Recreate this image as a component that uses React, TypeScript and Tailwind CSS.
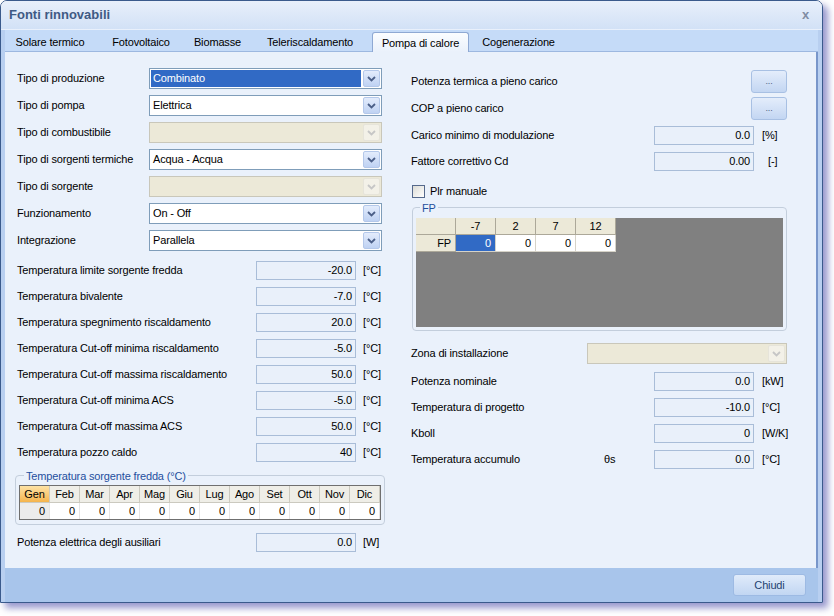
import React from "react";

const months = ["Gen", "Feb", "Mar", "Apr", "Mag", "Giu", "Lug", "Ago", "Set", "Ott", "Nov", "Dic"];

const tabs = [
  { label: "Solare termico", w: "w-[90px]" },
  { label: "Fotovoltaico", w: "w-[92px]" },
  { label: "Biomasse", w: "w-[61px]" },
  { label: "Teleriscaldamento", w: "w-[124px]" },
  { label: "Pompa di calore", w: "w-[97px]", active: true },
  { label: "Cogenerazione", w: "w-[99px]" },
];

function Chevron({ disabled }: { disabled?: boolean }) {
  return (
    <svg width="9" height="6" viewBox="0 0 9 6">
      <path d="M1 1 L4.5 4.5 L8 1" stroke={disabled ? "#c6c6c6" : "#4b5f88"} strokeWidth="1.8" fill="none" />
    </svg>
  );
}

function Combo({ value, selected, disabled, width }: { value?: string; selected?: boolean; disabled?: boolean; width: string }) {
  return (
    <div
      className={`${width} h-[21px] flex items-stretch border p-[1px] ${
        disabled ? "bg-[#ece9d8] border-[#c9c7ba]" : "bg-white border-[#7f9db9]"
      }`}
    >
      <div className={`flex-1 flex items-center px-[2px] ${selected ? "bg-[#316ac5] text-white" : ""}`}>{value}</div>
      <div
        className={`w-[17px] ml-[2px] rounded-[2px] border flex items-center justify-center ${
          disabled ? "border-[#e6e4da] bg-[#f3f1e8]" : "border-[#b4c8ea] bg-linear-to-b from-[#e3ecfc] to-[#bfd2f3]"
        }`}
      >
        <Chevron disabled={disabled} />
      </div>
    </div>
  );
}

function Field({ value }: { value: string }) {
  return (
    <div className="w-[100px] h-[19px] border border-[#a9bdd8] bg-[#e9f0fa] flex items-center justify-end pr-[3px]">
      {value}
    </div>
  );
}

function DotsButton() {
  return (
    <div className="w-[36px] h-[23px] rounded-[3px] border border-[#a8c0e3] bg-linear-to-b from-[#e4edfb] to-[#c3d6f2] flex items-end justify-center pb-[4px] text-[9px] text-[#4d6185]">
      ...
    </div>
  );
}

function SelectRow({ label, ...rest }: { label: string; value?: string; selected?: boolean; disabled?: boolean }) {
  return (
    <div className="flex h-[27px] items-center">
      <span className="w-[132px]">{label}</span>
      <Combo width="w-[233px]" {...rest} />
    </div>
  );
}

function TempRow({ label, value, unit = "[°C]" }: { label: string; value: string; unit?: string }) {
  return (
    <div className="flex h-[26px] items-center">
      <span className="w-[239px]">{label}</span>
      <Field value={value} />
      <span className="ml-[7px]">{unit}</span>
    </div>
  );
}

function RightRow({ label, value, unit, extra }: { label: string; value: string; unit: string; extra?: string }) {
  return (
    <div className="flex h-[26px] items-center">
      {extra ? (
        <>
          <span className="w-[193px]">{label}</span>
          <span className="w-[50px]">{extra}</span>
        </>
      ) : (
        <span className="w-[243px]">{label}</span>
      )}
      <Field value={value} />
      <span className={unit === "[-]" ? "ml-[14px]" : "ml-[8px]"}>{unit}</span>
    </div>
  );
}

export default function App() {
  return (
    <div className="w-[834px] h-[616px] bg-white font-['Liberation_Sans',Arial,sans-serif] text-[11px] tracking-[-0.15px] text-black">
      <div className="w-[823px] h-[603px] border border-[#3a5a8c] rounded-t-[7px] overflow-hidden flex flex-col shadow-[5px_5px_7px_rgba(80,80,170,0.6)]">
        {/* title bar */}
        <div className="h-[29px] flex items-center justify-between pl-[8px] pr-[13px] bg-linear-to-b from-[#e8effb] to-[#d2e1f6] border-b border-[#e9f0fb]">
          <span className="text-[13px] font-bold tracking-normal text-[#3f5a84]">Fonti rinnovabili</span>
          <span className="text-[13px] font-bold text-[#7f8ca3]">x</span>
        </div>

        <div className="flex-1 flex flex-col px-[4px] bg-[#b8cff0]">
          {/* tabs */}
          <div className="h-[22px] flex items-end bg-[#c5dbf8] border-b border-[#9db8e0]">
            {tabs.map((t) =>
              t.active ? (
                <div
                  key={t.label}
                  className={`${t.w} h-[20px] -mb-[1px] pt-[2px] rounded-t-[3px] border border-b-0 border-[#8fa9d3] bg-linear-to-b from-[#fbfdff] to-[#eaf1fb] flex items-center justify-center`}
                >
                  {t.label}
                </div>
              ) : (
                <div key={t.label} className={`${t.w} h-[21px] pt-[3px] flex items-center justify-center`}>
                  {t.label}
                </div>
              )
            )}
          </div>

          {/* content */}
          <div className="flex-1 bg-[#eaf1fb] border-r-2 border-[#7896ca] flex pl-[12px]">
            {/* left column */}
            <div className="w-[368px] pt-[13px] flex flex-col">
              <SelectRow label="Tipo di produzione" value="Combinato" selected />
              <SelectRow label="Tipo di pompa" value="Elettrica" />
              <SelectRow label="Tipo di combustibile" disabled />
              <SelectRow label="Tipo di sorgenti termiche" value="Acqua - Acqua" />
              <SelectRow label="Tipo di sorgente" disabled />
              <SelectRow label="Funzionamento" value="On - Off" />
              <SelectRow label="Integrazione" value="Parallela" />

              <div className="mt-[3px]">
                <TempRow label="Temperatura limite sorgente fredda" value="-20.0" />
                <TempRow label="Temperatura bivalente" value="-7.0" />
                <TempRow label="Temperatura spegnimento riscaldamento" value="20.0" />
                <TempRow label="Temperatura Cut-off minima riscaldamento" value="-5.0" />
                <TempRow label="Temperatura Cut-off massima riscaldamento" value="50.0" />
                <TempRow label="Temperatura Cut-off minima ACS" value="-5.0" />
                <TempRow label="Temperatura Cut-off massima ACS" value="50.0" />
                <TempRow label="Temperatura pozzo caldo" value="40" />
              </div>

              <div className="relative mt-[10px] -ml-[2px] w-[370px] h-[50px] border border-[#c3cedc] rounded-[4px] px-[3px] pt-[9px]">
                <span className="absolute left-[8px] -top-[8px] px-[2px] bg-[#eaf1fb] text-[#1f4f9e]">
                  Temperatura sorgente fredda (°C)
                </span>
                <div className="border border-[#6f6f6f] flex flex-col">
                  <div className="flex h-[17px]">
                    {months.map((m, i) => (
                      <div
                        key={m}
                        className={`w-[30px] flex items-center justify-center border-r border-b border-[#cbc9bf] ${
                          i === 0 ? "bg-linear-to-b from-[#fde2a4] to-[#f5b44b]" : "bg-[#efeee7]"
                        }`}
                      >
                        {m}
                      </div>
                    ))}
                  </div>
                  <div className="flex h-[16px]">
                    {months.map((m, i) => (
                      <div
                        key={m}
                        className={`w-[30px] flex items-center justify-end pr-[4px] border-r border-[#e4e4e4] ${
                          i === 0 ? "bg-[#ececec]" : "bg-white"
                        }`}
                      >
                        0
                      </div>
                    ))}
                  </div>
                </div>
              </div>

              <div className="mt-[4px]">
                <TempRow label="Potenza elettrica degli ausiliari" value="0.0" unit="[W]" />
              </div>
            </div>

            {/* right column */}
            <div className="ml-[26px] pt-[16px] flex flex-col">
              <div className="flex h-[27px] items-center">
                <span className="w-[340px]">Potenza termica a pieno carico</span>
                <DotsButton />
              </div>
              <div className="flex h-[27px] items-center">
                <span className="w-[340px]">COP a pieno carico</span>
                <DotsButton />
              </div>
              <RightRow label="Carico minimo di modulazione" value="0.0" unit="[%]" />
              <RightRow label="Fattore correttivo Cd" value="0.00" unit="[-]" />

              <div className="flex h-[26px] items-center mt-[4px] pl-[1px]">
                <div className="w-[13px] h-[13px] border border-[#55698c] bg-linear-to-br from-[#dcdcd6] to-white" />
                <span className="ml-[5px]">Plr manuale</span>
              </div>

              <div className="relative mt-[3px] ml-[1px] w-[375px] h-[124px] border border-[#c3cedc] rounded-[4px] px-[3px] pt-[10px] pb-[3px]">
                <span className="absolute left-[7px] -top-[8px] px-[2px] bg-[#eaf1fb] text-[#1f4f9e]">FP</span>
                <div className="h-full bg-[#808080]">
                  <div className="flex h-[17px]">
                    {["", "-7", "2", "7", "12"].map((h, i) => (
                      <div
                        key={i}
                        className="w-[40px] flex items-center justify-center bg-[#ece9d8] border-r border-b border-[#aca899]"
                      >
                        {h}
                      </div>
                    ))}
                  </div>
                  <div className="flex h-[17px]">
                    <div className="w-[40px] flex items-center justify-end pr-[4px] bg-[#ece9d8] border-r border-b border-[#aca899]">
                      FP
                    </div>
                    {[0, 1, 2, 3].map((i) => (
                      <div
                        key={i}
                        className={`w-[40px] flex items-center justify-end pr-[4px] border-r border-b border-[#d6d3c8] ${
                          i === 0 ? "bg-[#316ac5] text-white" : "bg-white"
                        }`}
                      >
                        0
                      </div>
                    ))}
                  </div>
                </div>
              </div>

              <div className="flex h-[27px] items-center mt-[9px]">
                <span className="w-[176px]">Zona di installazione</span>
                <Combo width="w-[200px]" disabled />
              </div>
              <div className="mt-[1px]">
                <RightRow label="Potenza nominale" value="0.0" unit="[kW]" />
                <RightRow label="Temperatura di progetto" value="-10.0" unit="[°C]" />
                <RightRow label="Kboll" value="0" unit="[W/K]" />
                <RightRow label="Temperatura accumulo" extra="θs" value="0.0" unit="[°C]" />
              </div>
            </div>
          </div>

          {/* bottom bar */}
          <div className="h-[34px] flex items-center justify-end pr-[12px] bg-[#a8c5eb]">
            <div className="w-[73px] h-[22px] rounded-[3px] border border-[#9dbae3] bg-linear-to-b from-[#e0ebfa] to-[#c2d6f2] flex items-center justify-center text-[#24426f]">
              Chiudi
            </div>
          </div>
        </div>
      </div>
    </div>
  );
}
